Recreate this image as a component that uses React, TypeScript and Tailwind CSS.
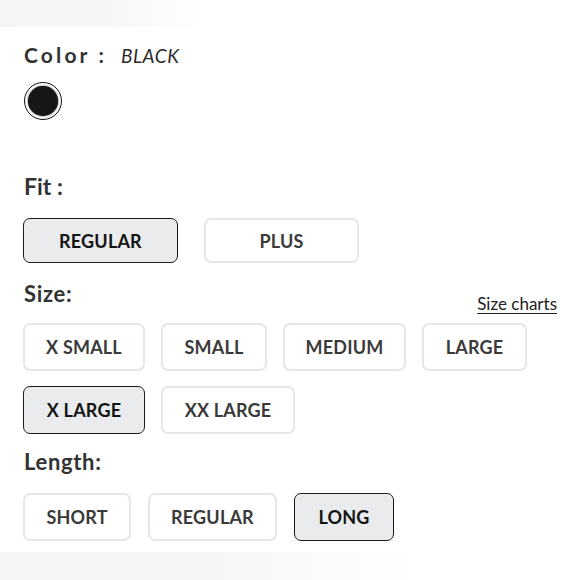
import React from 'react';

type Opt = { label: string; w: string; selected?: boolean };

const fits: Opt[] = [
    { label: 'REGULAR', w: 'w-[155px]', selected: true },
    { label: 'PLUS', w: 'w-[155px]' },
];

const sizesTop: Opt[] = [
    { label: 'X SMALL', w: 'w-[122px]' },
    { label: 'SMALL', w: 'w-[106px]' },
    { label: 'MEDIUM', w: 'w-[123px]' },
    { label: 'LARGE', w: 'w-[105px]' },
];

const sizesBottom: Opt[] = [
    { label: 'X LARGE', w: 'w-[122px]', selected: true },
    { label: 'XX LARGE', w: 'w-[134px]' },
];

const lengths: Opt[] = [
    { label: 'SHORT', w: 'w-[108px]' },
    { label: 'REGULAR', w: 'w-[129px]' },
    { label: 'LONG', w: 'w-[100px]', selected: true },
];

const OptionButton = ({ opt, h }: { opt: Opt; h: string }) => (
    <button
        className={`${opt.w} ${h} shrink-0 rounded-[7px] flex items-center justify-center text-[18px] font-bold leading-none tracking-[0.01em] ${
            opt.selected
                ? 'bg-[#e9ebec] border-[1.75px] border-[#1b1b1b] text-[#141414]'
                : 'bg-white border-2 border-[#e6e6e6] text-[#3a3a3a]'
        }`}
    >
        {opt.label}
    </button>
);

export default function App() {
    return (
        <div className="w-[580px] h-[580px] bg-white overflow-hidden flex flex-col font-['Lato',sans-serif] text-[#333]">
            {/* faint top strip */}
            <div className="h-[27px] w-[205px] shrink-0 bg-gradient-to-r from-[#f5f5f5] via-[#f6f6f6] to-white" />

            <div className="pl-[23px] pr-[23px] flex flex-col">
                {/* Color */}
                <div className="ml-[1px] mt-[17px] flex items-baseline leading-none">
                    <span className="text-[21px] font-bold tracking-[0.15em] text-[#333]">Color :</span>
                    <span className="ml-[14px] text-[19px] italic text-[#2a2a2a] tracking-[0.03em]">BLACK</span>
                </div>
                <div className="ml-[1px] mt-[17px] w-[38px] h-[38px] rounded-full border-[1.5px] border-[#111] flex items-center justify-center">
                    <div className="w-[30px] h-[30px] rounded-full bg-[#161616] shadow-[0_0_2px_#222]" />
                </div>

                {/* Fit */}
                <div className="ml-[1px] mt-[55px] text-[23px] font-bold leading-none">Fit :</div>
                <div className="mt-[20px] flex gap-[26px]">
                    {fits.map((o) => (
                        <OptionButton key={o.label} opt={o} h="h-[45px]" />
                    ))}
                </div>

                {/* Size */}
                <div className="mt-[20px] flex justify-between items-start">
                    <div className="ml-[1px] text-[22px] font-bold leading-none tracking-[0.03em]">Size:</div>
                    <a className="mt-[12px] text-[17px] leading-none text-[#222] underline underline-offset-[3px]">
                        Size charts
                    </a>
                </div>
                <div className="mt-[11px] flex gap-[16px]">
                    {sizesTop.map((o) => (
                        <OptionButton key={o.label} opt={o} h="h-[48px]" />
                    ))}
                </div>
                <div className="mt-[15px] flex gap-[16px]">
                    {sizesBottom.map((o) => (
                        <OptionButton key={o.label} opt={o} h="h-[48px]" />
                    ))}
                </div>

                {/* Length */}
                <div className="ml-[1px] mt-[17px] text-[22px] font-bold leading-none tracking-[0.03em]">Length:</div>
                <div className="mt-[20px] flex gap-[17px]">
                    {lengths.map((o) => (
                        <OptionButton key={o.label} opt={o} h="h-[48px]" />
                    ))}
                </div>
            </div>

            {/* faint bottom strip */}
            <div className="mt-auto h-[28px] w-[420px] shrink-0 bg-gradient-to-r from-[#f5f5f5] via-[#f6f6f6] to-white" />
        </div>
    );
}
